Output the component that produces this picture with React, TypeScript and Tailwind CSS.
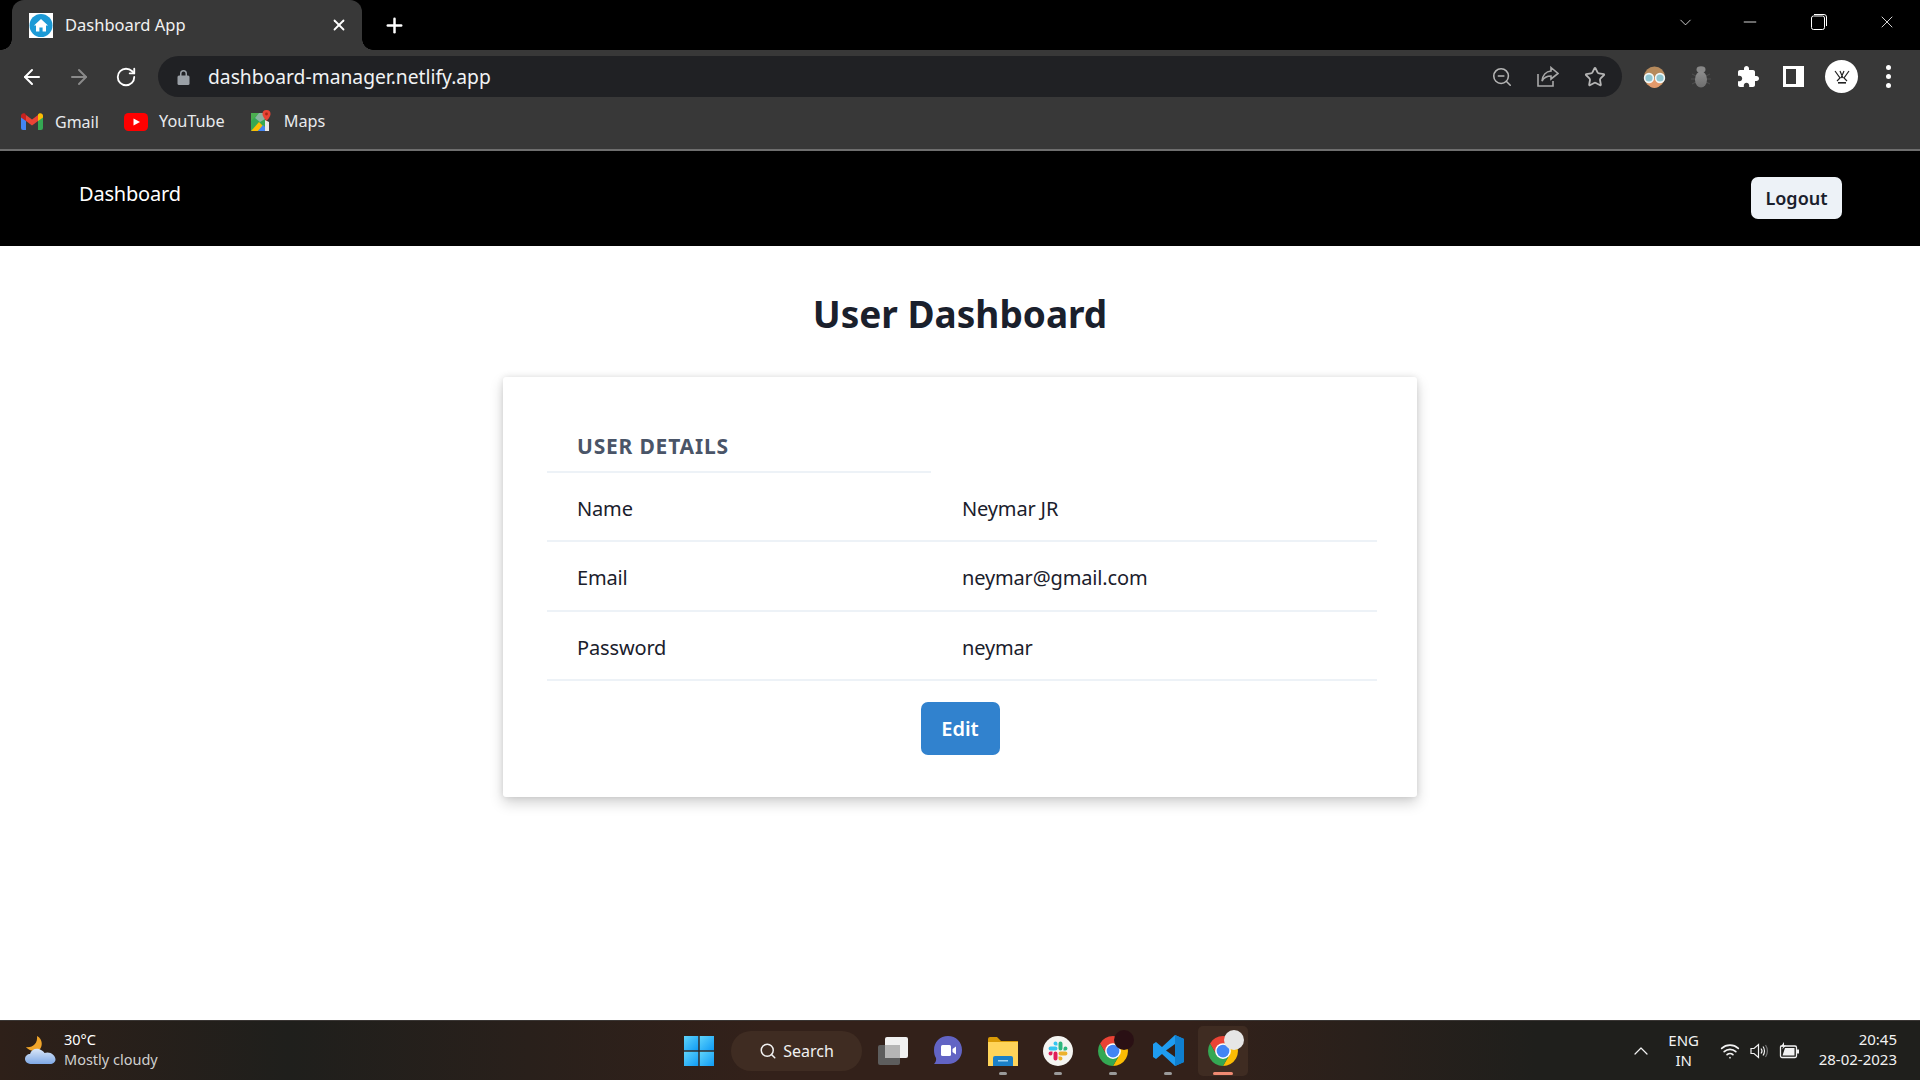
import React from 'react';
import { ArrowLeft, ArrowRight, RotateCw, ZoomOut, Star, Plus, X, Minus, ChevronDown, ChevronUp, Search, Wifi } from 'lucide-react';

const uiFont = "font-['Noto_Sans','Open_Sans',sans-serif]";

const HomeFavicon = () => (
    <svg width="24" height="25" viewBox="0 0 24 25">
        <rect width="24" height="25" fill="#fff" />
        <circle cx="12" cy="12.5" r="11.5" fill="#1c9ad6" />
        <path d="M12 6 L19 12.5 H17 V18.5 H13.6 V14.5 H10.4 V18.5 H7 V12.5 H5 Z" fill="#fff" />
    </svg>
);

const GmailIcon = () => (
    <svg width="22" height="17" viewBox="0 0 22 17">
        <path d="M0 3 V15 a2 2 0 0 0 2 2 H5 V7 Z" fill="#4285f4" />
        <path d="M22 3 V15 a2 2 0 0 1 -2 2 H17 V7 Z" fill="#34a853" />
        <path d="M17 1.5 V8 L22 4.5 V2.5 C22 0.5 19.5 -0.5 18 0.6 Z" fill="#fbbc04" />
        <path d="M5 8 V2 L11 6.5 L17 2 V8 L11 12.5 Z" fill="#ea4335" />
        <path d="M0 2.5 V4.5 L5 8 V2 L4 0.6 C2.5 -0.5 0 0.5 0 2.5 Z" fill="#c5221f" />
    </svg>
);

const YoutubeIcon = () => (
    <svg width="24" height="18" viewBox="0 0 24 18">
        <rect width="24" height="18" rx="4.5" fill="#ff0000" />
        <path d="M9.5 5.5 L16 9 L9.5 12.5 Z" fill="#fff" />
    </svg>
);

const MapsIcon = () => (
    <svg width="21" height="23" viewBox="0 0 21 23">
        <path d="M1 3 H15 V21 H1 Z" fill="#34a853" />
        <path d="M1 3 H9 L1 11 Z" fill="#4caf50" />
        <path d="M1 21 L9 12 L13 16 L8 21 Z" fill="#fbbc04" />
        <path d="M8 21 L13 15 L19 21 Z" fill="#4285f4" />
        <path d="M9 3 H15 V9 L10 12 L5 8 Z" fill="#8ab4a0" />
        <path d="M15 21 V10 L19 12 V21 Z" fill="#e8e8e8" />
        <path d="M16.5 0 a4 4 0 0 1 4 4 c0 3 -4 7 -4 7 s-4 -4 -4 -7 a4 4 0 0 1 4 -4 Z" fill="#ea4335" />
        <circle cx="16.5" cy="4" r="1.4" fill="#a52714" />
    </svg>
);

const ShareIcon = () => (
    <svg width="22" height="21" viewBox="0 0 22 21" fill="none" stroke="#a8a8a8" strokeWidth="1.6">
        <path d="M1 8 V20 H16 V15" />
        <path d="M14 1.5 L21 7.5 L14 13 V10 C10 10 7 11.5 5 15 C5.5 9.5 9 5.5 14 5 Z" />
    </svg>
);

const AvatarExtension = () => (
    <svg width="23" height="22" viewBox="0 0 23 22">
        <circle cx="11.5" cy="11" r="10.5" fill="#b68a5c" />
        <path d="M3 13 H20 C19 19 15 22 11.5 22 S4 19 3 13 Z" fill="#e49a6c" />
        <circle cx="6" cy="12" r="4.4" fill="#8fc5d0" stroke="#f2f6f6" strokeWidth="1.6" />
        <circle cx="17" cy="12" r="4.4" fill="#8fc5d0" stroke="#f2f6f6" strokeWidth="1.6" />
    </svg>
);

const BugExtension = () => (
    <svg width="22" height="22" viewBox="0 0 22 22">
        <defs>
            <linearGradient id="bug" x1="0" y1="0" x2="0" y2="1">
                <stop offset="0" stopColor="#8d8d8d" />
                <stop offset="1" stopColor="#6e6e6e" />
            </linearGradient>
        </defs>
        <path d="M2 8 L6 10 M1 13 H6 M2 18 L6 16 M20 8 L16 10 M21 13 H16 M20 18 L16 16" stroke="#555" strokeWidth="0.8" />
        <ellipse cx="11" cy="3.5" rx="4.5" ry="3.2" fill="#888" />
        <ellipse cx="11" cy="13.5" rx="6" ry="8" fill="url(#bug)" />
    </svg>
);

const PuzzleIcon = () => (
    <svg width="24" height="24" viewBox="0 0 24 24" fill="#fff">
        <path d="M20.5 11H19V7c0-1.1-.9-2-2-2h-4V3.5C13 2.12 11.88 1 10.5 1S8 2.12 8 3.5V5H4c-1.1 0-1.99.9-1.99 2v3.8H3.5c1.49 0 2.7 1.21 2.7 2.7s-1.21 2.7-2.7 2.7H2V20c0 1.1.9 2 2 2h3.8v-1.5c0-1.49 1.21-2.7 2.7-2.7 1.49 0 2.7 1.21 2.7 2.7V22H17c1.1 0 2-.9 2-2v-4h1.5c1.38 0 2.5-1.12 2.5-2.5S21.88 11 20.5 11z" />
    </svg>
);

const ChromeIcon = () => (
    <svg width="30" height="30" viewBox="4 4 40 40">
        <path d="M24 4 A20 20 0 0 1 41.3 14 H24 L15.3 29 L6.7 14 A20 20 0 0 1 24 4 Z" fill="#ea4335" />
        <path d="M41.3 14 A20 20 0 0 1 24 44 L32.7 29 L24 14 Z" fill="#fbbc04" />
        <path d="M24 44 A20 20 0 0 1 6.7 14 L15.3 29 L32.7 29 Z" fill="#34a853" />
        <circle cx="24" cy="24" r="10.5" fill="#fff" />
        <circle cx="24" cy="24" r="8.5" fill="#4285f4" />
    </svg>
);

const WindowsLogo = () => (
    <svg width="30" height="30" viewBox="0 0 30 30">
        <defs>
            <linearGradient id="win" x1="0" y1="0" x2="1" y2="1">
                <stop offset="0" stopColor="#5fd4fb" />
                <stop offset="1" stopColor="#0f9bf5" />
            </linearGradient>
        </defs>
        <rect x="0" y="0" width="14.3" height="14.3" fill="url(#win)" />
        <rect x="15.7" y="0" width="14.3" height="14.3" fill="url(#win)" />
        <rect x="0" y="15.7" width="14.3" height="14.3" fill="url(#win)" />
        <rect x="15.7" y="15.7" width="14.3" height="14.3" fill="url(#win)" />
    </svg>
);

const TaskViewIcon = () => (
    <svg width="30" height="28" viewBox="0 0 30 28">
        <rect x="0" y="8" width="22" height="20" rx="2" fill="#5d5d5d" />
        <rect x="7" y="0" width="23" height="21" rx="2" fill="#f1f1f1" />
        <rect x="7" y="8" width="15" height="13" fill="#b5b5b5" />
    </svg>
);

const MeetIcon = () => (
    <svg width="30" height="32" viewBox="0 0 30 32">
        <path d="M15 1 C23 1 29 7 29 15 C29 23 23 29 15 29 H1 C3 27 3.4 25 3 23 C1.6 21 1 18 1 15 C1 7 7 1 15 1 Z" fill="#6264c4" />
        <rect x="8" y="10" width="10" height="11" rx="1.5" fill="#fff" />
        <path d="M19.5 14 L23 11.5 V19.5 L19.5 17 Z" fill="#fff" />
    </svg>
);

const FolderIcon = () => (
    <svg width="30" height="30" viewBox="0 0 30 30">
        <path d="M0 3 a2 2 0 0 1 2 -2 H9 L13 5 H30 V10 H0 Z" fill="#d99a06" />
        <path d="M0 6 H30 V30 H0 Z" fill="#ffd45a" />
        <path d="M5 22 a2 2 0 0 1 2 -2 H23 a2 2 0 0 1 2 2 V30 H5 Z" fill="#1b80c8" />
        <rect x="10" y="24" width="10" height="1.5" fill="#9ed3f2" />
    </svg>
);

const SlackIcon = () => (
    <svg width="30" height="30" viewBox="-7 -7 38 38">
        <circle cx="12" cy="12" r="19" fill="#f5f5f2" />
        <path fill="#e01e5a" d="M5.042 15.165a2.528 2.528 0 0 1-2.52 2.523A2.528 2.528 0 0 1 0 15.165a2.527 2.527 0 0 1 2.522-2.52h2.52v2.52zM6.313 15.165a2.527 2.527 0 0 1 2.521-2.52 2.527 2.527 0 0 1 2.521 2.52v6.313A2.528 2.528 0 0 1 8.834 24a2.528 2.528 0 0 1-2.521-2.522v-6.313z" />
        <path fill="#36c5f0" d="M8.834 5.042a2.528 2.528 0 0 1-2.521-2.52A2.528 2.528 0 0 1 8.834 0a2.528 2.528 0 0 1 2.521 2.522v2.52H8.834zM8.834 6.313a2.528 2.528 0 0 1 2.521 2.521 2.528 2.528 0 0 1-2.521 2.521H2.522A2.528 2.528 0 0 1 0 8.834a2.528 2.528 0 0 1 2.522-2.521h6.312z" />
        <path fill="#2eb67d" d="M18.956 8.834a2.528 2.528 0 0 1 2.522-2.521A2.528 2.528 0 0 1 24 8.834a2.528 2.528 0 0 1-2.522 2.521h-2.522V8.834zM17.688 8.834a2.528 2.528 0 0 1-2.523 2.521 2.527 2.527 0 0 1-2.52-2.521V2.522A2.527 2.527 0 0 1 15.165 0a2.528 2.528 0 0 1 2.523 2.522v6.312z" />
        <path fill="#ecb22e" d="M15.165 18.956a2.528 2.528 0 0 1 2.523 2.522A2.528 2.528 0 0 1 15.165 24a2.527 2.527 0 0 1-2.52-2.522v-2.522h2.52zM15.165 17.688a2.527 2.527 0 0 1-2.52-2.523 2.526 2.526 0 0 1 2.52-2.52h6.313A2.527 2.527 0 0 1 24 15.165a2.528 2.528 0 0 1-2.522 2.523h-6.313z" />
    </svg>
);

const VsCodeIcon = () => (
    <svg width="31" height="31" viewBox="0 0 31 31">
        <path d="M22 0 L31 4 V27 L22 31 L9 19 L3 24 L0 22 V9 L3 7 L9 12 Z M22 9 L13 15.5 L22 22 Z" fill="#1f9cf0" />
        <path d="M22 0 L31 4 V27 L22 31 Z" fill="#0f7fcf" />
    </svg>
);

const WeatherIcon = () => (
    <svg width="31" height="32" viewBox="0 0 31 32">
        <defs>
            <linearGradient id="cloud" x1="0" y1="0" x2="0" y2="1">
                <stop offset="0" stopColor="#d9e6f7" />
                <stop offset="1" stopColor="#7fa9e6" />
            </linearGradient>
        </defs>
        <path d="M12 1 C18 4 18 12 14 15 C10 17 4 16 1 12 C7 13 13 9 12 1 Z" fill="#f0a52a" />
        <path d="M7 29 C3 29 0 27 0 24 C0 21 2.5 19 5 19 C6 15 10 13 14 14 C17 15 19 17 19.5 18 C25 16 30.5 20 30.5 24.5 C30.5 27 28 29 25 29 Z" fill="url(#cloud)" />
    </svg>
);

const VolumeIcon = () => (
    <svg width="18" height="16" viewBox="0 0 18 16" fill="none" stroke="#f2f2f2" strokeWidth="1.2">
        <path d="M1 5.5 H4 L8.5 1.5 V14.5 L4 10.5 H1 Z" />
        <path d="M11 5.5 C12.2 7 12.2 9 11 10.5 M13 3.5 C15 6 15 10 13 12.5" />
        <path d="M15.5 2 C18 5.5 18 10.5 15.5 14" stroke="#777" />
    </svg>
);

const BatteryIcon = () => (
    <svg width="20" height="17" viewBox="0 0 20 17">
        <path d="M2 4 H16 a1.5 1.5 0 0 1 1.5 1.5 V14 a1.5 1.5 0 0 1 -1.5 1.5 H3 A1.5 1.5 0 0 1 1.5 14 V5 Z" fill="none" stroke="#f2f2f2" strokeWidth="1.3" />
        <path d="M6 6 H15.5 V13.5 H3.5 Z" fill="#f2f2f2" />
        <rect x="18" y="7.5" width="2" height="4" fill="#f2f2f2" />
        <path d="M5 0 L2 4.5 H4.5 L3 7.5 L7 3.5 H5 Z" fill="#f2f2f2" />
    </svg>
);

const BrowserChrome = () => (
    <div className={`${uiFont} shrink-0 bg-[#383838] text-white`}>
        <div className="flex h-[50px] items-center bg-black">
            <div className="relative ml-[12px] flex h-full w-[350px] items-center rounded-t-[12px] bg-[#383838] pl-[17px] pr-[14px]">
                <span className="absolute bottom-0 left-[-11px] h-[11px] w-[11px] bg-[radial-gradient(circle_at_0_0,#000_10.5px,#383838_11px)]" />
                <span className="absolute bottom-0 right-[-11px] h-[11px] w-[11px] bg-[radial-gradient(circle_at_100%_0,#000_10.5px,#383838_11px)]" />
                <HomeFavicon />
                <span className="ml-[12px] flex-1 text-[16.5px] text-[#f1f1f1]">Dashboard App</span>
                <X size={18} strokeWidth={2.4} />
            </div>
            <Plus size={23} strokeWidth={2.6} className="ml-[21px]" />
            <div className="mb-[6px] ml-auto flex items-center text-white">
                <ChevronDown size={19} strokeWidth={1} className="mr-[45px]" />
                <Minus size={20} strokeWidth={1} className="mr-[51px]" />
                <svg width="16" height="16" viewBox="0 0 16 16" fill="none" stroke="#fff" strokeWidth="1" className="mr-[50px]">
                    <rect x="0.5" y="2" width="13" height="13.5" rx="2" />
                    <path d="M3 0.5 H13 a2.5 2.5 0 0 1 2.5 2.5 V12" />
                </svg>
                <X size={20} strokeWidth={1} className="mr-[23px]" />
            </div>
        </div>
        <div className="flex h-[48px] items-center pt-[5px]">
            <ArrowLeft size={24} strokeWidth={2} className="ml-[20px]" />
            <ArrowRight size={24} strokeWidth={2} className="ml-[23px] text-[#8a8a8a]" />
            <RotateCw size={22} strokeWidth={2} className="ml-[24px]" />
            <div className="ml-[21px] flex h-[41px] w-[1464px] items-center rounded-full bg-[#202124] pl-[19px] pr-[16px]">
                <svg width="13" height="16" viewBox="0 0 13 16" fill="#9aa0a6">
                    <path d="M3 7 V4.5 a3.5 3.5 0 0 1 7 0 V7 H8.5 V4.5 a2 2 0 0 0 -4 0 V7 Z" />
                    <rect x="0.5" y="6.5" width="12" height="9.5" rx="1.5" />
                </svg>
                <span className="ml-[18px] flex-1 pt-[1px] text-[19.25px] text-[#f1f3f4]">dashboard-manager.netlify.app</span>
                <ZoomOut size={22} strokeWidth={1.7} className="mr-[24px] text-[#b5b5b5]" />
                <span className="mr-[25px]"><ShareIcon /></span>
                <Star size={22} strokeWidth={2} className="text-[#b5b5b5]" />
            </div>
            <div className="ml-[21px] flex items-center">
                <AvatarExtension />
                <span className="ml-[24px]"><BugExtension /></span>
                <span className="ml-[24px]"><PuzzleIcon /></span>
                <span className="ml-[23px] box-border h-[21px] w-[21px] border-[3px] border-white bg-[#383838] border-r-[8px]" />
                <span className="ml-[21px] flex h-[33px] w-[33px] items-center justify-center rounded-full bg-white">
                    <svg width="16" height="16" viewBox="0 0 16 16" fill="none" stroke="#222" strokeWidth="1.2">
                        <path d="M1 2 L6 9 L3 12 M15 2 L10 9 L13 12 M6 2 L9 9 M10 2 L7 9" />
                        <rect x="4" y="13" width="8" height="1.6" fill="#222" stroke="none" />
                    </svg>
                </span>
                <span className="ml-[28px] flex flex-col gap-[4px]">
                    <span className="h-[5px] w-[5px] rounded-full bg-white" />
                    <span className="h-[5px] w-[5px] rounded-full bg-white" />
                    <span className="h-[5px] w-[5px] rounded-full bg-white" />
                </span>
            </div>
        </div>
        <div className="flex h-[51px] items-center pb-[4px] pl-[21px] text-[16px] text-[#e8eaed]">
            <GmailIcon />
            <span className="ml-[12px] w-[46px]">Gmail</span>
            <span className="ml-[23px]"><YoutubeIcon /></span>
            <span className="ml-[11px] text-[16.25px]">YouTube</span>
            <span className="ml-[25px]"><MapsIcon /></span>
            <span className="ml-[13px] text-[16.25px]">Maps</span>
        </div>
        <div className="h-[2px] bg-[#6e6e6e]" />
    </div>
);

const rows = [
    { label: 'Name', value: 'Neymar JR', height: 'h-[69px]' },
    { label: 'Email', value: 'neymar@gmail.com', height: 'h-[70px]' },
    { label: 'Password', value: 'neymar', height: 'h-[69px]' },
];

const UserCard = () => (
    <div className="h-[420px] w-[914px] rounded-[3px] bg-white pl-[44px] pr-[40px] shadow-[0_6px_14px_rgba(0,0,0,0.18),0_0_6px_rgba(0,0,0,0.1)]">
        <div className="flex h-[96px] w-[384px] items-end border-b-2 border-[#edf2f7] pb-[10px] pl-[30px]">
            <span className="text-[21px] font-bold uppercase leading-[30px] tracking-[0.8px] text-[#4a5568]">User Details</span>
        </div>
        {rows.map(row => (
            <div key={row.label} className={`grid grid-cols-[384px_1fr] items-center border-b-2 border-[#edf2f7] pt-[4px] text-[20px] tracking-[-0.15px] text-[#1a202c] ${row.height}`}>
                <span className="pl-[30px]">{row.label}</span>
                <span className="pl-[31px]">{row.value}</span>
            </div>
        ))}
        <div className="mt-[21px] flex justify-center pr-[4px]">
            <button type="button" className="h-[53px] w-[79px] rounded-[7px] bg-[#3182ce] text-[20px] font-semibold text-white">
                Edit
            </button>
        </div>
    </div>
);

const Taskbar = () => (
    <div className={`${uiFont} grid h-[60px] shrink-0 grid-cols-[1fr_auto_1fr] items-center border-t border-[#3a3634] bg-[linear-gradient(90deg,#2e2019_0%,#1f1f1c_15%,#33211a_40%,#33211a_62%,#1f1f1c_80%,#1f1f1c_100%)] text-white`}>
        <div className="flex items-center pl-[25px]">
            <WeatherIcon />
            <div className="mb-[4px] ml-[8px] text-[14.5px] leading-[20px]">
                <div>30°C</div>
                <div className="text-[#cfcfcf]">Mostly cloudy</div>
            </div>
        </div>
        <div className="flex items-center pl-[2px]">
            <div className="flex h-[50px] w-[50px] items-center justify-center"><WindowsLogo /></div>
            <div className="ml-[7px] flex h-[40px] w-[131px] items-center justify-center gap-[6px] rounded-full bg-[#3f2c22] text-[16px] text-[#f1f1f1]">
                <Search size={18} strokeWidth={2} />
                Search
            </div>
            <div className="ml-[6px] flex items-center gap-[5px]">
                <div className="flex h-[50px] w-[50px] items-center justify-center"><TaskViewIcon /></div>
                <div className="flex h-[50px] w-[50px] items-center justify-center"><MeetIcon /></div>
                <div className="relative flex h-[50px] w-[50px] items-center justify-center">
                    <FolderIcon />
                    <span className="absolute bottom-[1px] h-[3px] w-[8px] rounded-full bg-[#9a9a9a]" />
                </div>
                <div className="relative flex h-[50px] w-[50px] items-center justify-center">
                    <SlackIcon />
                    <span className="absolute bottom-[1px] h-[3px] w-[8px] rounded-full bg-[#9a9a9a]" />
                </div>
                <div className="relative flex h-[50px] w-[50px] items-center justify-center">
                    <ChromeIcon />
                    <span className="absolute right-[4px] top-[4px] h-[20px] w-[20px] rounded-full bg-[#2a1014]" />
                    <span className="absolute bottom-[1px] h-[3px] w-[8px] rounded-full bg-[#9a9a9a]" />
                </div>
                <div className="relative flex h-[50px] w-[50px] items-center justify-center">
                    <VsCodeIcon />
                    <span className="absolute bottom-[1px] h-[3px] w-[8px] rounded-full bg-[#9a9a9a]" />
                </div>
                <div className="relative flex h-[50px] w-[50px] items-center justify-center rounded-[5px] bg-[#3f2c22]">
                    <ChromeIcon />
                    <span className="absolute right-[4px] top-[4px] h-[20px] w-[20px] rounded-full bg-[#e6e6e6]" />
                    <span className="absolute bottom-[1px] h-[3px] w-[20px] rounded-full bg-[#f08a72]" />
                </div>
            </div>
        </div>
        <div className="flex items-center justify-end pr-[23px] text-[15px] text-[#f2f2f2]">
            <ChevronUp size={24} strokeWidth={1.2} className="mr-[2px]" />
            <div className="mb-[2px] ml-[11px] w-[36px] text-center leading-[20px]">
                <div>ENG</div>
                <div>IN</div>
            </div>
            <Wifi size={20} strokeWidth={2} className="ml-[18px]" />
            <span className="ml-[10px] flex"><VolumeIcon /></span>
            <span className="ml-[11px] flex"><BatteryIcon /></span>
            <div className="mb-[3px] ml-[20px] text-right leading-[20px]">
                <div>20:45</div>
                <div>28-02-2023</div>
            </div>
        </div>
    </div>
);

const App: React.FC = () => {
    return (
        <div className="flex h-screen w-full flex-col overflow-hidden bg-white font-['Noto_Sans','Open_Sans',sans-serif]">
            <BrowserChrome />
            <div className="flex h-[95px] shrink-0 items-start justify-between bg-black pl-[79px] pr-[78px]">
                <span className="mt-[28px] text-[20px] leading-[30px] tracking-[-0.2px] text-white">Dashboard</span>
                <button type="button" className="mt-[26px] h-[42px] w-[91px] rounded-[7px] bg-[#edf2f7] text-[18px] font-semibold text-[#1a202c]">
                    Logout
                </button>
            </div>
            <main className="flex flex-1 flex-col items-center pt-[43px]">
                <h1 className="mb-[38px] h-[50px] text-[37px] font-bold leading-[50px] text-[#1a202c]">User Dashboard</h1>
                <UserCard />
            </main>
            <Taskbar />
        </div>
    );
};

export default App;
